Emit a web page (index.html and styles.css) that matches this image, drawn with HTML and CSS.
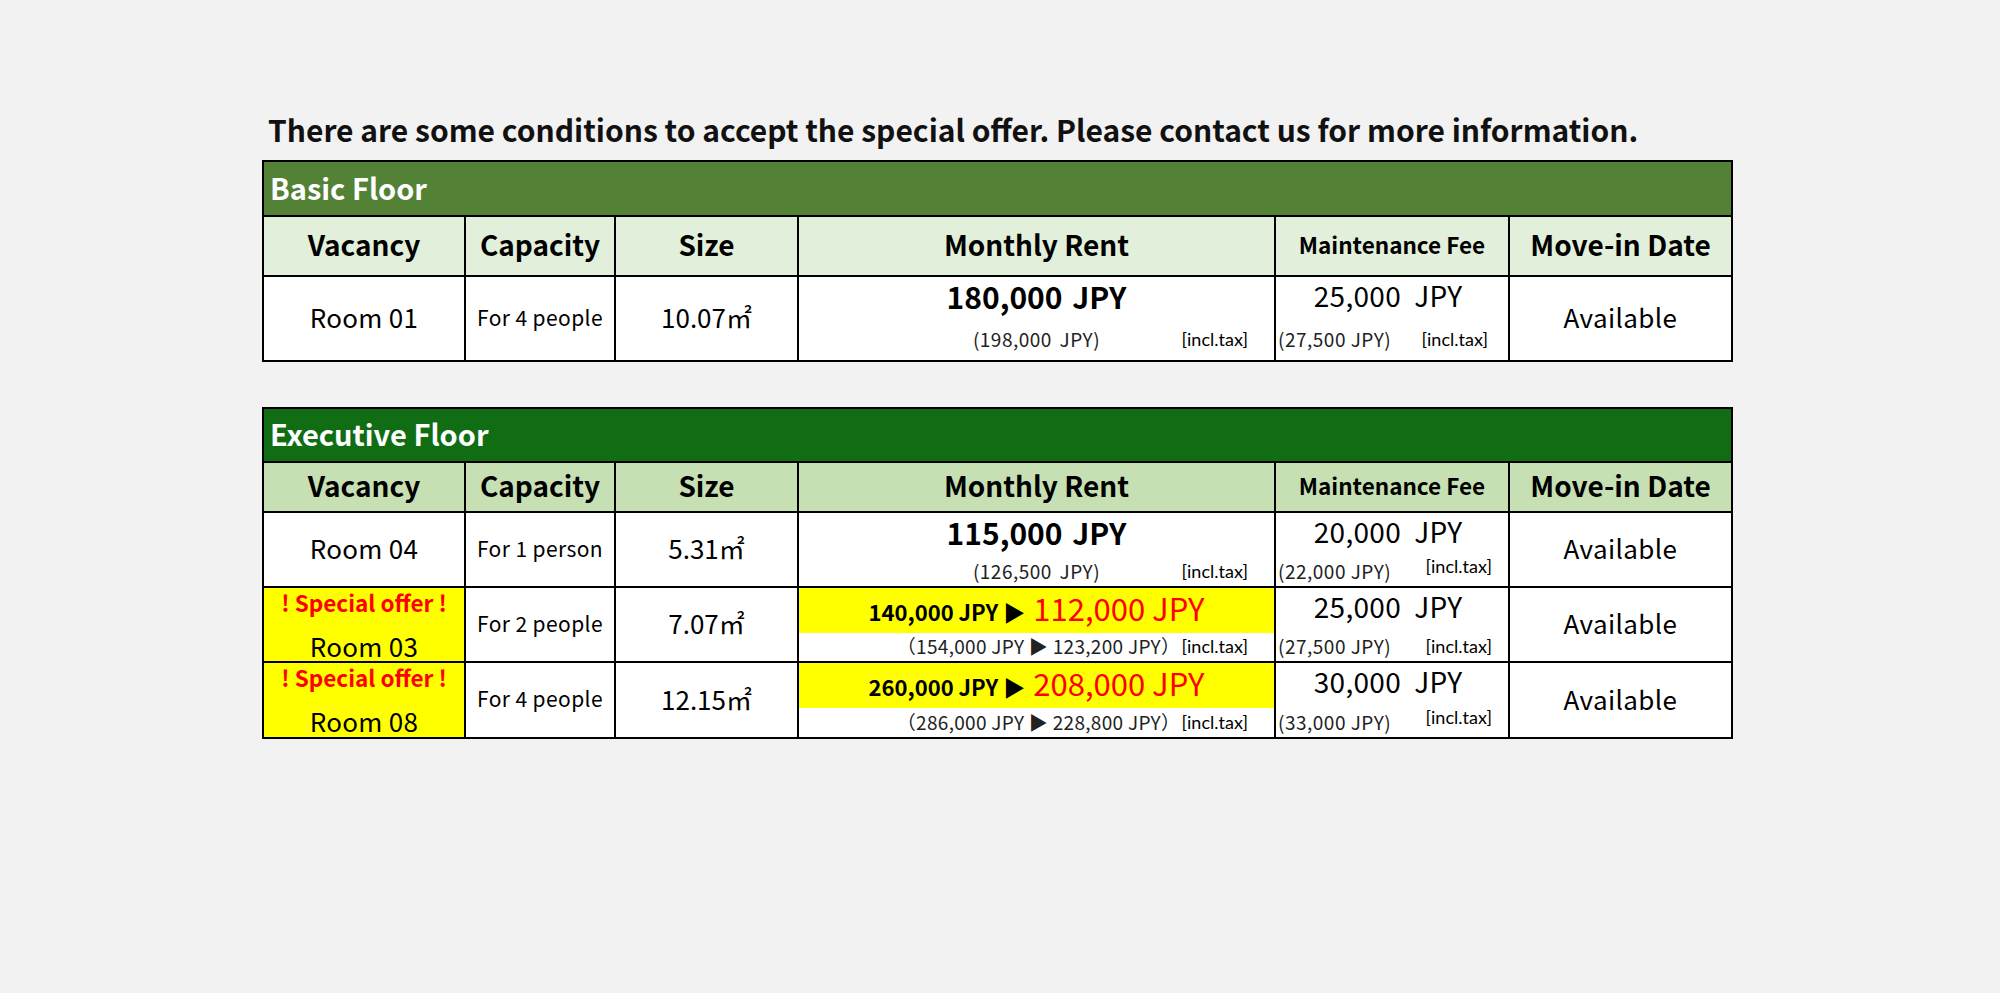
FILE: index.html
```html
<!DOCTYPE html>
<html lang="en">
<head>
<meta charset="utf-8">
<title>Vacancy</title>
<link rel="stylesheet" href="styles.css">
</head>
<body>
<div class="page">
  <p class="notice">There are some conditions to accept the special offer. Please contact us for more information.</p>

  <section class="floor basic">
    <div class="floor-title">Basic Floor</div>
    <div class="th">Vacancy</div>
    <div class="th">Capacity</div>
    <div class="th">Size</div>
    <div class="th">Monthly Rent</div>
    <div class="th th-small">Maintenance Fee</div>
    <div class="th">Move-in Date</div>

    <div class="td room">Room 01</div>
    <div class="td cap">For 4 people</div>
    <div class="td size">10.07㎡</div>
    <div class="td rent">
      <div class="main">180,000 JPY</div>
      <div class="sub"><span></span><span class="tax-in">(198,000 JPY)</span><span class="tax">[incl.tax]</span></div>
    </div>
    <div class="td fee">
      <div class="main">25,000&nbsp; JPY</div>
      <div class="sub"><span>(27,500 JPY)</span><span class="tax">[incl.tax]</span></div>
    </div>
    <div class="td avail">Available</div>
  </section>

  <section class="floor exec">
    <div class="floor-title">Executive Floor</div>
    <div class="th">Vacancy</div>
    <div class="th">Capacity</div>
    <div class="th">Size</div>
    <div class="th">Monthly Rent</div>
    <div class="th th-small">Maintenance Fee</div>
    <div class="th">Move-in Date</div>

    <div class="td room">Room 04</div>
    <div class="td cap">For 1 person</div>
    <div class="td size">5.31㎡</div>
    <div class="td rent">
      <div class="main">115,000 JPY</div>
      <div class="sub"><span></span><span class="tax-in">(126,500 JPY)</span><span class="tax">[incl.tax]</span></div>
    </div>
    <div class="td fee">
      <div class="main">20,000&nbsp; JPY</div>
      <div class="sub"><span>(22,000 JPY)</span><span class="tax tax-up">[incl.tax]</span></div>
    </div>
    <div class="td avail">Available</div>

    <div class="td room offer-room">
      <div class="offer-label">! Special offer !</div>
      <div class="offer-name">Room 03</div>
    </div>
    <div class="td cap">For 2 people</div>
    <div class="td size">7.07㎡</div>
    <div class="td rent">
      <div class="main offer"><span class="old">140,000 JPY ▶</span><span class="new">112,000 JPY</span></div>
      <div class="sub"><span></span><span class="tax-in tax-in-offer">（154,000 JPY ▶ 123,200 JPY）</span><span class="tax">[incl.tax]</span></div>
    </div>
    <div class="td fee">
      <div class="main">25,000&nbsp; JPY</div>
      <div class="sub"><span>(27,500 JPY)</span><span class="tax">[incl.tax]</span></div>
    </div>
    <div class="td avail">Available</div>

    <div class="td room offer-room">
      <div class="offer-label">! Special offer !</div>
      <div class="offer-name">Room 08</div>
    </div>
    <div class="td cap">For 4 people</div>
    <div class="td size">12.15㎡</div>
    <div class="td rent">
      <div class="main offer"><span class="old">260,000 JPY ▶</span><span class="new">208,000 JPY</span></div>
      <div class="sub"><span></span><span class="tax-in tax-in-offer">（286,000 JPY ▶ 228,800 JPY）</span><span class="tax">[incl.tax]</span></div>
    </div>
    <div class="td fee">
      <div class="main">30,000&nbsp; JPY</div>
      <div class="sub"><span>(33,000 JPY)</span><span class="tax tax-up">[incl.tax]</span></div>
    </div>
    <div class="td avail">Available</div>
  </section>
</div>
</body>
</html>
```

FILE: styles.css
```css
html, body {
  margin: 0;
  padding: 0;
  background: #f2f2f2;
}

body {
  font-family: "Noto Sans CJK JP", "Noto Sans", sans-serif;
  color: #000;
}

.page {
  padding: 109px 0 0 262px;
}

.notice {
  margin: 0 0 11px 0;
  padding-left: 6px;
  font-size: 30px;
  line-height: 40px;
  font-weight: 700;
  color: #111;
}

.floor {
  display: grid;
  grid-template-columns: 200px 148px 181px 475px 232px 221px;
  gap: 2px;
  padding: 2px;
  background: #000;
  width: max-content;
}

.basic {
  grid-template-rows: 53px 58px 83px;
  margin-bottom: 45px;
}

.exec {
  grid-template-rows: 52px 48px 73px 73px 74px;
}

.floor-title {
  grid-column: 1 / -1;
  display: flex;
  align-items: center;
  padding: 0 0 4px 6px;
  color: #fff;
  font-size: 29px;
  font-weight: 700;
}

.basic .floor-title { background: #538135; }
.exec .floor-title { background: #106d14; }

.th {
  display: flex;
  align-items: center;
  justify-content: center;
  padding-bottom: 4px;
  font-size: 28px;
  font-weight: 700;
  white-space: nowrap;
}

.basic .th { background: #e2efda; }
.exec .th { background: #c6e0b4; }

.th-small {
  font-size: 22.5px;
}

.td {
  background: #fff;
  white-space: nowrap;
}

.room, .cap, .size, .avail {
  display: flex;
  align-items: center;
  justify-content: center;
  padding-bottom: 4px;
}

.room { font-size: 26px; letter-spacing: 0.3px; }
.cap { font-size: 21px; letter-spacing: 0.4px; }
.size { font-size: 26px; }
.avail { font-size: 26px; letter-spacing: 0.4px; }

.rent, .fee {
  display: flex;
  flex-direction: column;
}

.rent .main {
  font-size: 30px;
  line-height: 36px;
  font-weight: 700;
  text-align: center;
  padding-top: 1px;
  word-spacing: 3px;
}

.fee .main {
  font-size: 28px;
  line-height: 36px;
  text-align: center;
  padding-right: 8px;
  letter-spacing: 0.3px;
}

.sub {
  margin-top: auto;
  font-size: 19px;
  line-height: 26px;
  color: #222;
  letter-spacing: 0.5px;
}

.basic .sub { padding-bottom: 8px; }
.exec .sub { padding-bottom: 2px; }

.rent .sub {
  display: grid;
  grid-template-columns: 1fr auto 1fr;
}

.rent .sub .tax-in {
  word-spacing: 3px;
}

.rent .sub .tax-in-offer {
  word-spacing: 0;
  letter-spacing: 0.3px;
  padding-left: 4px;
}

.rent .sub .tax {
  justify-self: end;
  padding-right: 26px;
}

.fee .sub {
  display: flex;
  justify-content: space-between;
  padding-left: 2px;
  padding-right: 20px;
}

.exec .fee .sub {
  padding-right: 16px;
}

.tax {
  font-family: "Lato", "Open Sans", sans-serif;
  font-size: 18px;
  letter-spacing: 0;
  color: #000;
}

.tax-up {
  position: relative;
  top: -5px;
}

.rent .main.offer {
  height: 45px;
  line-height: 40px;
  padding-top: 0;
  background: #ffff00;
  display: flex;
  justify-content: center;
  align-items: baseline;
  gap: 8px;
  word-spacing: 0;
}

.offer .old {
  font-size: 22px;
  font-weight: 700;
}

.offer .new {
  font-size: 31px;
  font-weight: 400;
  color: #ff0000;
}

.offer-room {
  background: #ffff00;
  flex-direction: column;
  justify-content: flex-start;
  padding-bottom: 0;
  letter-spacing: 0;
}

.offer-label {
  font-size: 22.5px;
  line-height: 29px;
  font-weight: 700;
  color: #ff0000;
}

.offer-name {
  margin-top: 14px;
  font-size: 26px;
  line-height: 30px;
  letter-spacing: 0.3px;
}
```
